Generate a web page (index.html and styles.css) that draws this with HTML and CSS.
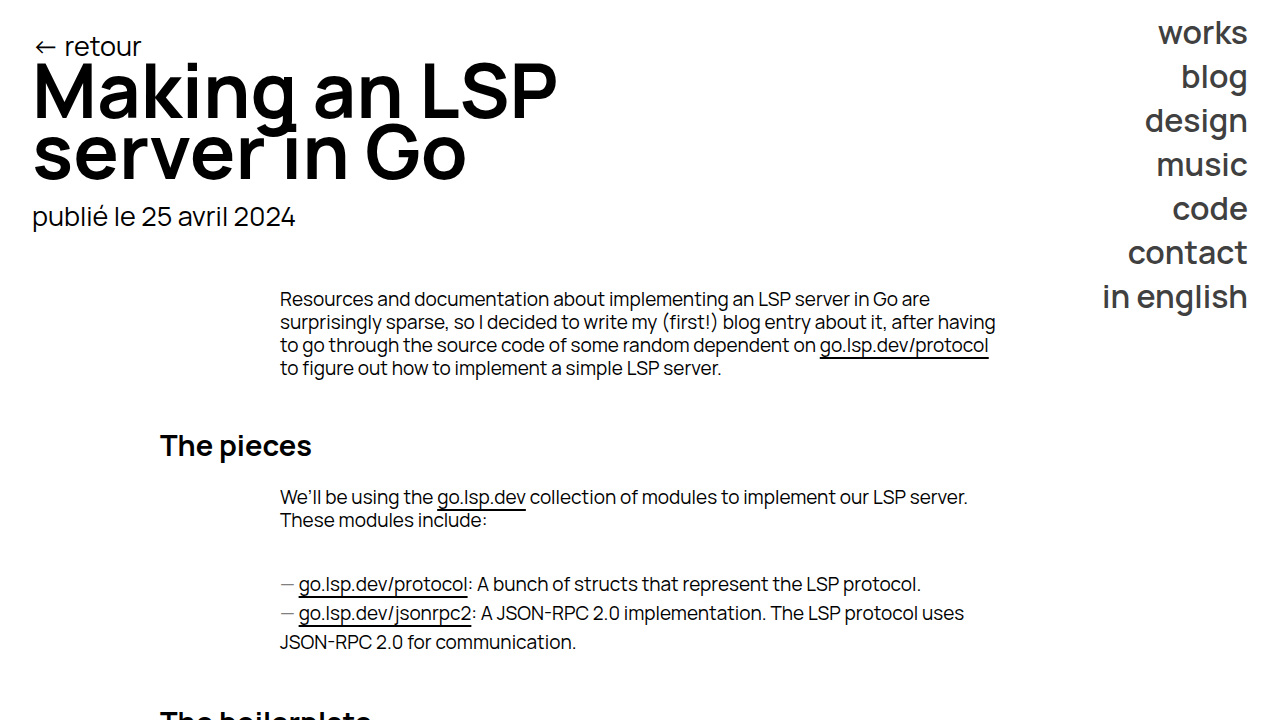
FILE: index.html
```html
<!DOCTYPE html>
<html lang="fr">
<head>
<meta charset="utf-8">
<meta name="viewport" content="width=device-width, initial-scale=1">
<title>Making an LSP server in Go</title>
<link rel="stylesheet" href="styles.css">
</head>
<body>
<div class="page">
  <header class="intro">
    <a class="back" href="#blog">← retour</a>
    <h1 class="title">Making an LSP server in Go</h1>
    <p class="date">publié le 25 avril 2024</p>
  </header>
  <nav class="menu">
    <a href="#works">works</a>
    <a href="#blog">blog</a>
    <a href="#design">design</a>
    <a href="#music">music</a>
    <a href="#code">code</a>
    <a href="#contact">contact</a>
    <a href="#en">in english</a>
  </nav>
  <main class="article">
    <p class="text">Resources and documentation about implementing an LSP server in Go are surprisingly sparse, so I decided to write my (first!) blog entry about it, after having to go through the source code of some random dependent on <a class="link" href="#protocol">go.lsp.dev/protocol</a> to figure out how to implement a simple LSP server.</p>
    <h2 class="heading">The pieces</h2>
    <p class="text">We’ll be using the <a class="link" href="#lsp">go.lsp.dev</a> collection of modules to implement our LSP server. These modules include:</p>
    <ul class="list">
      <li><a class="link" href="#protocol">go.lsp.dev/protocol</a>: A bunch of structs that represent the LSP protocol.</li>
      <li><a class="link" href="#jsonrpc2">go.lsp.dev/jsonrpc2</a>: A JSON-RPC 2.0 implementation. The LSP protocol uses JSON-RPC 2.0 for communication.</li>
    </ul>
    <h2 class="heading">The boilerplate</h2>
  </main>
</div>
</body>
</html>
```
FILE: styles.css
```css
* { box-sizing: border-box; }
html { overflow: hidden; }
body {
  margin: 0;
  background: #fff;
  color: #000;
  font-family: Manrope, Inter, sans-serif;
  font-weight: 400;
}
a { color: inherit; text-decoration: none; }
.page {
  display: grid;
  grid-template-columns: 1fr auto;
  grid-template-rows: auto 1fr;
}
.intro { grid-area: 1 / 1; padding: 29px 32px 0; }
.back { display: block; font-size: 27px; line-height: 34px; }
.title {
  max-width: 600px;
  margin: -4px 0 18px;
  font-size: 76px;
  line-height: 61px;
  font-weight: 700;
}
.date { margin: 0; font-size: 27px; line-height: 34px; }
.menu {
  grid-area: 1 / 2 / 3 / 3;
  display: flex;
  flex-direction: column;
  align-items: flex-end;
  align-self: start;
  padding: 10px 32px 0 0;
  color: #404040;
  font-size: 32px;
  line-height: 44px;
  font-weight: 600;
}
.article {
  grid-area: 2 / 1 / 3 / 3;
  width: 100%;
  max-width: 960px;
  margin: 55px auto 0;
  padding: 0 0 64px;
}
.text, .list {
  max-width: 720px;
  margin: 0 auto;
  font-size: 19px;
  line-height: 23px;
}
.heading { margin: 47px 0 23px; font-size: 29px; line-height: 36px; font-weight: 700; }
.link {
  text-decoration: underline 2px;
  text-underline-offset: 5px;
  text-decoration-skip-ink: none;
}
.list { margin-top: 38px; padding: 0; list-style: none; line-height: 29px; }
.list li::before { content: "— "; color: #808080; }
```
